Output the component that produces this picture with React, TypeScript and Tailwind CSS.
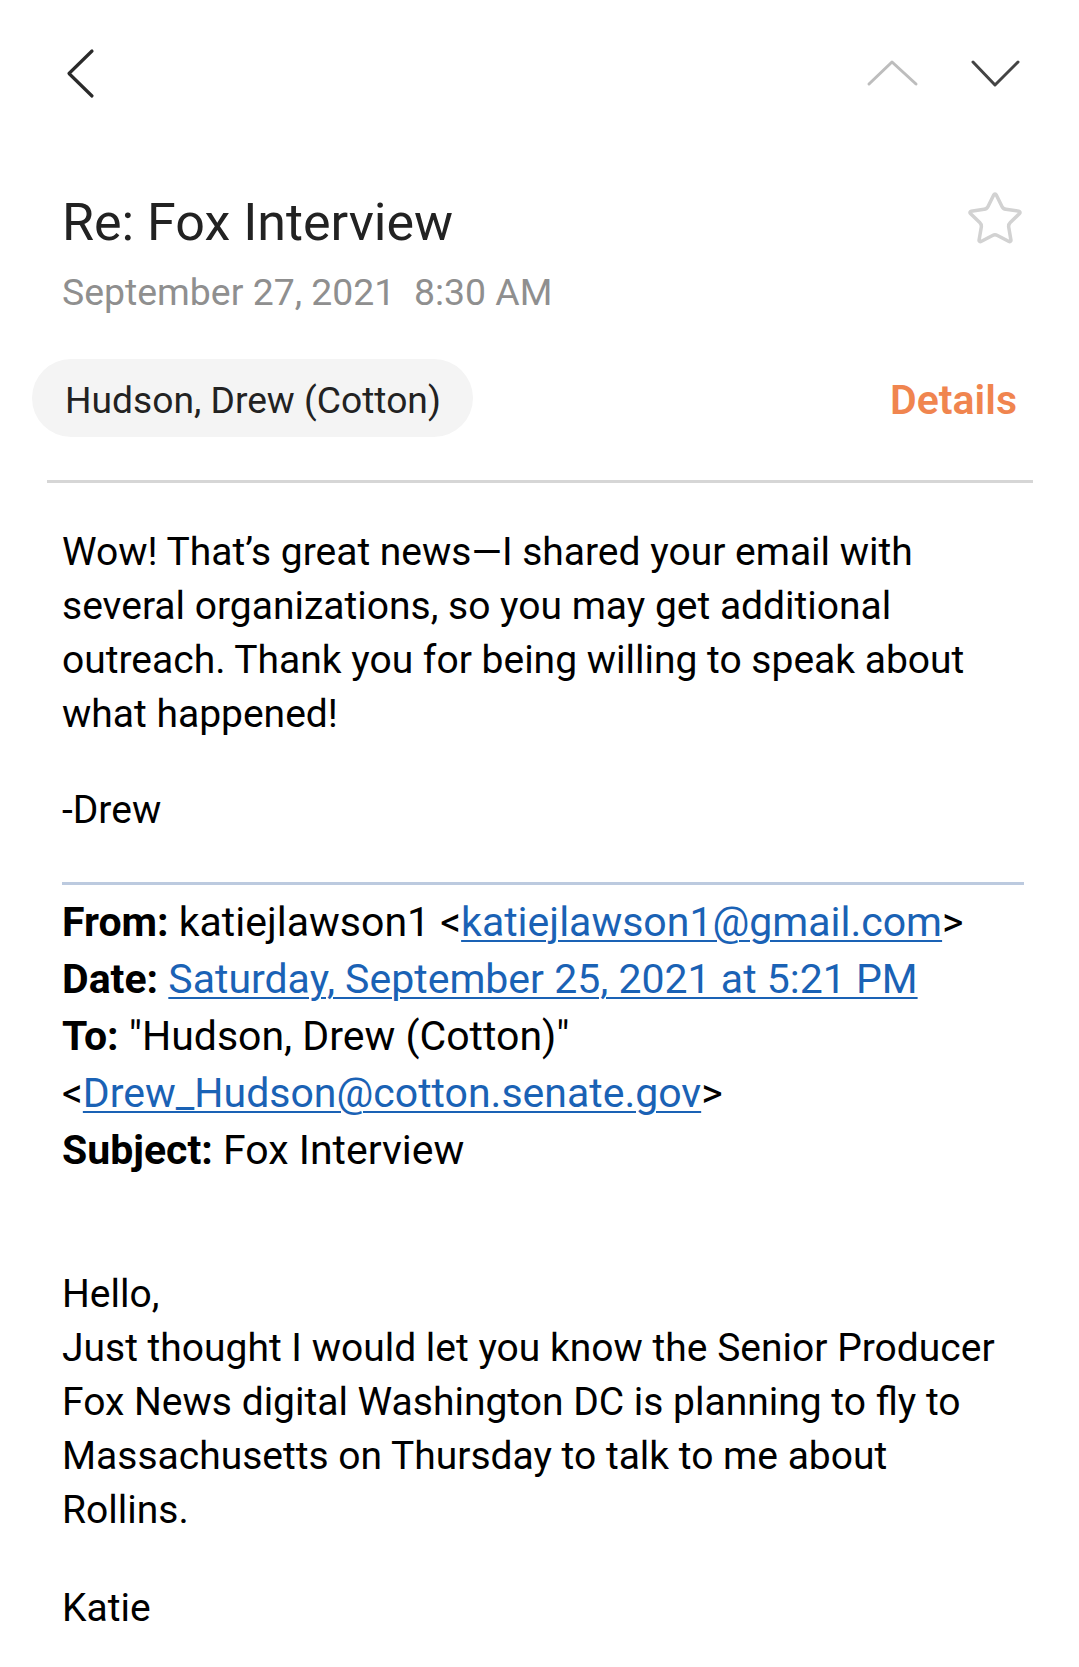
import { Star } from "lucide-react"

const reply = [
  "Wow! That’s great news—I shared your email with",
  "several organizations, so you may get additional",
  "outreach. Thank you for being willing to speak about",
  "what happened!",
]

const original = [
  "Hello,",
  "Just thought I would let you know the Senior Producer",
  "Fox News digital Washington DC is planning to fly to",
  "Massachusetts on Thursday to talk to me about",
  "Rollins.",
]

function Link({ children }: { children: React.ReactNode }) {
  return <a href="#" className="text-[#1a62b5] underline decoration-[2px] underline-offset-[4px]">{children}</a>
}

export default function App() {
  return (
    <div className="w-[1079px] min-h-[1667px] bg-white font-['Roboto',sans-serif] text-black">
      {/* top bar */}
      <div className="h-[193px] flex items-start justify-between pl-[64px] pr-[56px] pt-[48px]">
        <svg width="32" height="52" viewBox="0 0 32 52" fill="none">
          <polyline points="28,3 5,25.5 28,48" stroke="#2a2a2a" strokeWidth="3.2" strokeLinecap="round" strokeLinejoin="round" />
        </svg>
        <div className="flex gap-[48px] pt-[10px]">
          <svg width="56" height="30" viewBox="0 0 56 30" fill="none">
            <polyline points="4,26 27,4 51,26" stroke="#bdbdbd" strokeWidth="3" strokeLinecap="round" strokeLinejoin="round" />
          </svg>
          <svg width="54" height="30" viewBox="0 0 54 30" fill="none">
            <polyline points="4,4 26,27 49,4" stroke="#444444" strokeWidth="3" strokeLinecap="round" strokeLinejoin="round" />
          </svg>
        </div>
      </div>

      {/* subject */}
      <div className="flex items-start justify-between pl-[62px] pr-[54px]">
        <div>
          <h1 className="text-[52px] leading-[60px] text-[#222222] font-normal">Re: Fox Interview</h1>
          <div className="mt-[14px] text-[37.4px] leading-[50px] text-[#8f8f8f] whitespace-pre">September 27, 2021  8:30 AM</div>
        </div>
        <Star size={60} strokeWidth={1.4} color="#d2d2d2" className="-mt-[4px]" />
      </div>

      {/* sender */}
      <div className="mt-[42px] flex items-center justify-between pl-[32px] pr-[62px]">
        <div className="h-[78px] rounded-full bg-[#f4f4f4] pl-[33px] pr-[32px] pt-[4px] text-[37.2px] leading-[74px] text-[#222222]">
          Hudson, Drew (Cotton)
        </div>
        <div className="pt-[4px] text-[41px] leading-[74px] font-semibold text-[#f0854f]">Details</div>
      </div>
      <div className="mt-[43px] ml-[47px] w-[986px] h-[3px] bg-[#d6d6d6]" />

      {/* body */}
      <div className="pl-[62px] pr-[30px] text-[39px]">
        <div className="mt-[42px] leading-[54px]">
          {reply.map((l) => (
            <div key={l} className="whitespace-nowrap">{l}</div>
          ))}
        </div>
        <div className="mt-[42px] leading-[54px]">-Drew</div>
      </div>
      <div className="mt-[45px] ml-[62px] w-[962px] h-[3px] bg-[#bccadf]" />

      <div className="pl-[62px] pr-[20px] text-[41px] leading-[57px] mt-[9px]">
        <div className="whitespace-nowrap">
          <b className="font-bold">From:</b> katiejlawson1 &lt;<Link>katiejlawson1@gmail.com</Link>&gt;
        </div>
        <div className="whitespace-nowrap">
          <b className="font-bold">Date:</b> <Link>Saturday, September 25, 2021 at 5:21 PM</Link>
        </div>
        <div className="whitespace-nowrap">
          <b className="font-bold">To:</b> "Hudson, Drew (Cotton)"
        </div>
        <div className="whitespace-nowrap">
          &lt;<Link>Drew_Hudson@cotton.senate.gov</Link>&gt;
        </div>
        <div className="whitespace-nowrap">
          <b className="font-bold">Subject:</b> Fox Interview
        </div>
      </div>

      <div className="pl-[62px] pr-[30px] text-[39px] leading-[54px]">
        <div className="mt-[88px]">
          {original.map((l) => (
            <div key={l} className="whitespace-nowrap">{l}</div>
          ))}
        </div>
        <div className="mt-[44px] pb-[40px]">Katie</div>
      </div>
    </div>
  )
}
